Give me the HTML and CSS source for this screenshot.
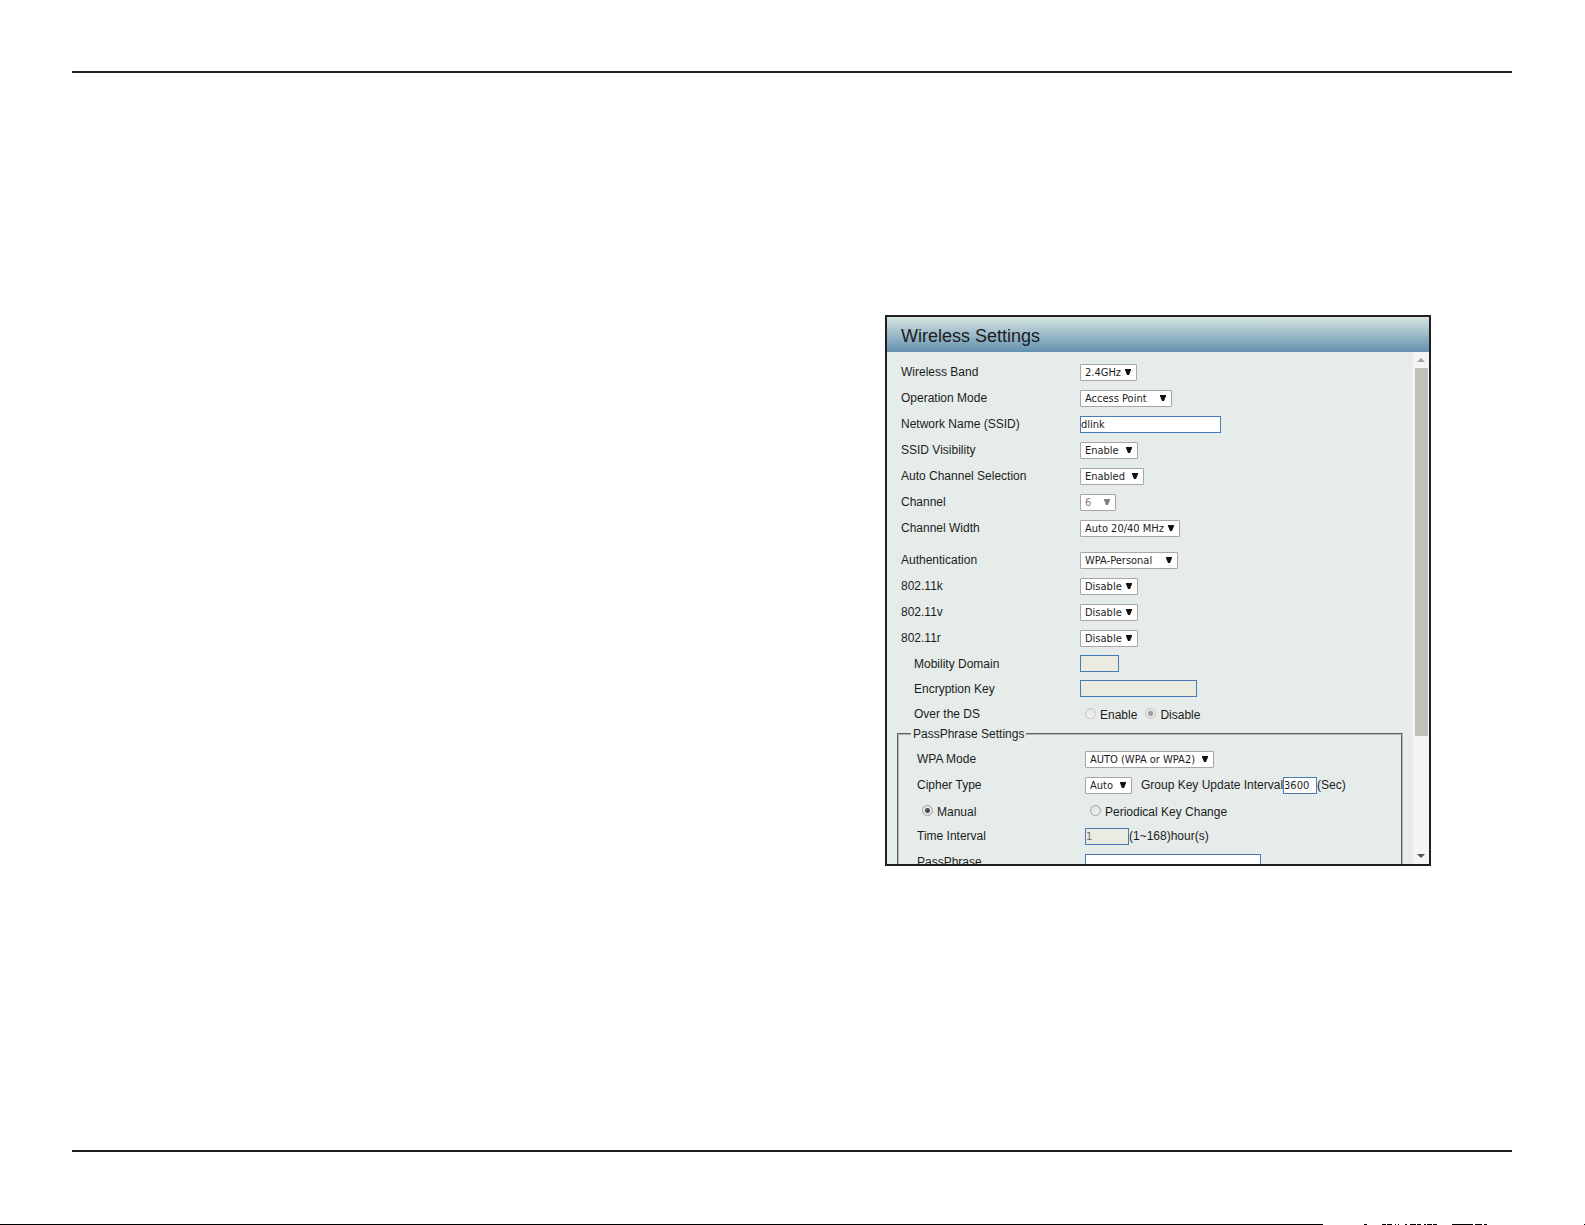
FILE: index.html
```html
<!DOCTYPE html>
<html lang="en">
<head>
    <meta charset="UTF-8">
    <meta name="viewport" content="width=device-width, initial-scale=1.0">
    <title>Wireless Settings</title>
    <link rel="stylesheet" href="styles.css">
</head>
<body>
    <main class="sheet">
        <section class="panel">
            <h1 class="panel-title">Wireless Settings</h1>
            <div class="panel-body">
                <form class="settings">
                    <div class="row">
                        <label for="band">Wireless Band</label>
                        <select id="band" class="w-57"><option>2.4GHz</option></select>
                    </div>
                    <div class="row">
                        <label for="mode">Operation Mode</label>
                        <select id="mode" class="w-92"><option>Access Point</option></select>
                    </div>
                    <div class="row">
                        <label for="ssid">Network Name (SSID)</label>
                        <input type="text" id="ssid" class="w-141" value="dlink">
                    </div>
                    <div class="row">
                        <label for="visibility">SSID Visibility</label>
                        <select id="visibility" class="w-58"><option>Enable</option></select>
                    </div>
                    <div class="row">
                        <label for="auto-channel">Auto Channel Selection</label>
                        <select id="auto-channel" class="w-64"><option>Enabled</option></select>
                    </div>
                    <div class="row">
                        <label for="channel">Channel</label>
                        <select id="channel" class="w-36" disabled><option>6</option></select>
                    </div>
                    <div class="row">
                        <label for="width">Channel Width</label>
                        <select id="width" class="w-100"><option>Auto 20/40 MHz</option></select>
                    </div>

                    <div class="row section">
                        <label for="auth">Authentication</label>
                        <select id="auth" class="w-98"><option>WPA-Personal</option></select>
                    </div>
                    <div class="row">
                        <label for="k">802.11k</label>
                        <select id="k" class="w-58"><option>Disable</option></select>
                    </div>
                    <div class="row">
                        <label for="v">802.11v</label>
                        <select id="v" class="w-58"><option>Disable</option></select>
                    </div>
                    <div class="row">
                        <label for="r">802.11r</label>
                        <select id="r" class="w-58"><option>Disable</option></select>
                    </div>
                    <div class="row sub">
                        <label for="domain">Mobility Domain</label>
                        <input type="text" id="domain" class="w-39" disabled>
                    </div>
                    <div class="row sub">
                        <label for="key">Encryption Key</label>
                        <input type="text" id="key" class="w-117" disabled>
                    </div>
                    <div class="row sub">
                        <span>Over the DS</span>
                        <div class="radios">
                            <label class="radio"><input type="radio" name="ds" disabled><span>Enable</span></label>
                            <label class="radio"><input type="radio" name="ds" checked disabled><span>Disable</span></label>
                        </div>
                    </div>

                    <fieldset>
                        <legend>PassPhrase Settings</legend>
                        <div class="row">
                            <label for="wpa">WPA Mode</label>
                            <select id="wpa" class="w-129"><option>AUTO (WPA or WPA2)</option></select>
                        </div>
                        <div class="row">
                            <label for="cipher">Cipher Type</label>
                            <div class="inline">
                                <select id="cipher" class="w-47"><option>Auto</option></select>
                                <label for="interval" class="group-key">Group Key Update Interval</label>
                                <input type="text" id="interval" class="w-34" value="3600">
                                <span>(Sec)</span>
                            </div>
                        </div>
                        <div class="row radio-row">
                            <label class="radio"><input type="radio" name="change" checked><span>Manual</span></label>
                            <label class="radio"><input type="radio" name="change"><span>Periodical Key Change</span></label>
                        </div>
                        <div class="row">
                            <label for="time">Time Interval</label>
                            <div class="inline">
                                <input type="text" id="time" class="w-44" value="1" disabled>
                                <span>(1~168)hour(s)</span>
                            </div>
                        </div>
                        <div class="row">
                            <label for="pass">PassPhrase</label>
                            <input type="text" id="pass" class="w-176">
                        </div>
                    </fieldset>
                </form>
                <div class="scrollbar">
                    <svg class="arrow" viewBox="0 0 16 16"><path d="M4 10h8L8 6z" fill="#a3a3a3"/></svg>
                    <div class="track"><div class="thumb"></div></div>
                    <svg class="arrow" viewBox="0 0 16 16"><path d="M4 6h8l-4 4z" fill="#505050"/></svg>
                </div>
            </div>
        </section>
    </main>
    <footer class="strip">
        <div class="strip-bar"></div>
        <svg class="strip-marks" viewBox="0 0 124 1" shape-rendering="crispEdges">
            <path d="M0 0h3v1H0zM18 0h4v1h-4zM23 0h5v1h-5zM31 0h1v1h-1zM34 0h1v1h-1zM41 0h2v1h-2zM46 0h6v1h-6zM53 0h4v1h-4zM60 0h2v1h-2zM63 0h5v1h-5zM69 0h4v1h-4zM88 0h21v1H88zM111 0h7v1h-7zM120 0h3v1h-3z"/>
        </svg>
        <div class="strip-end"></div>
    </footer>
</body>
</html>
```
FILE: styles.css
```css
* {
    box-sizing: border-box;
}

body {
    margin: 0;
    min-height: 100vh;
    display: flex;
    flex-direction: column;
    background: #fff;
    color: #1c1c1c;
    font-family: "Liberation Sans", Arial, sans-serif;
    font-size: 12px;
    line-height: 14px;
}

/* ruled page area */
.sheet {
    flex: 1;
    margin: 71px 73px 72px 72px;
    padding: 242px 81px 0 0;
    border-top: 2px solid #231f20;
    border-bottom: 2px solid #231f20;
}

.panel {
    max-width: 546px;
    margin-left: auto;
    border: 2px solid #231f20;
    background: #e6ecea;
}

.panel-title {
    margin: 0;
    padding: 3px 14px 0;
    font-size: 18px;
    font-weight: normal;
    line-height: 32px;
    background: linear-gradient(#d5e5e2, #6390b0);
}

.panel-body {
    display: flex;
    height: 512px;
    overflow: hidden;
}

.settings {
    flex: 1;
    padding: 7px 10px 0;
}

.row {
    display: grid;
    grid-template-columns: 179px 1fr;
    align-items: center;
    height: 26px;
    padding-left: 4px;
}

.section {
    margin-top: 6px;
}

.sub {
    grid-template-columns: 166px 1fr;
    height: 25px;
    padding-left: 17px;
}

select,
input[type="text"] {
    height: 17px;
    margin: 0;
    font-family: "DejaVu Sans Condensed", "DejaVu Sans", sans-serif;
    font-size: 11px;
    color: #1c1c1c;
    background-color: #fff;
}

select {
    appearance: none;
    padding: 0 0 0 4px;
    border: 1px solid #a6a6a6;
    border-radius: 1px;
    background-image: url("data:image/svg+xml,%3Csvg xmlns='http://www.w3.org/2000/svg' width='6' height='6'%3E%3Cpath d='M0 0h6v1L4 6H2L0 1z' fill='%23111'/%3E%3C/svg%3E");
    background-repeat: no-repeat;
    background-position: right 5px top 4px;
}

select:disabled {
    color: #808080;
    opacity: 1;
    background-image: url("data:image/svg+xml,%3Csvg xmlns='http://www.w3.org/2000/svg' width='6' height='6'%3E%3Cpath d='M0 0h6v1L4 6H2L0 1z' fill='%23808080'/%3E%3C/svg%3E");
}

input[type="text"] {
    padding: 0;
    border: 1px solid #4a7ab5;
}

input[type="text"]:disabled {
    color: #6d6d6d;
    background-color: #ebebe2;
}

.w-34 { width: 34px; }
.w-36 { width: 36px; }
.w-39 { width: 39px; }
.w-44 { width: 44px; }
.w-47 { width: 47px; }
.w-57 { width: 57px; }
.w-58 { width: 58px; }
.w-64 { width: 64px; }
.w-92 { width: 92px; }
.w-98 { width: 98px; }
.w-100 { width: 100px; }
.w-117 { width: 117px; }
.w-129 { width: 129px; }
.w-141 { width: 141px; }
.w-176 { width: 176px; }

.inline,
.radios,
.radio {
    display: flex;
    align-items: center;
}

.group-key {
    margin-left: 9px;
}

.radios {
    gap: 8px;
    padding-left: 5px;
}

.radio {
    gap: 4px;
}

.radio span {
    padding-top: 3px;
}

input[type="radio"] {
    appearance: none;
    width: 11px;
    height: 11px;
    margin: 0;
    border: 1px solid #a0a0a0;
    border-radius: 50%;
    background: linear-gradient(#e2e2e2, #f2f2f2);
}

input[type="radio"]:checked {
    background: radial-gradient(circle, #4c4c4c 2px, #e6e6e6 3px);
}

input[type="radio"]:disabled {
    border-color: #c6c6c6;
}

input[type="radio"]:checked:disabled {
    background: radial-gradient(circle, #9c9c9c 2px, #e6e6e6 3px);
}

fieldset {
    margin: 1px 0 0;
    padding: 5px 12px 12px;
    border: 2px groove #b4b4b4;
}

legend {
    padding: 0 2px;
}

fieldset .row {
    grid-template-columns: 168px 1fr;
    padding-left: 6px;
}

fieldset .radio-row {
    height: 25px;
    padding-left: 11px;
}

/* scrollbar beside the form */
.scrollbar {
    display: flex;
    flex-direction: column;
    width: 16px;
    background: #f4f4f4;
}

.arrow {
    width: 16px;
    height: 16px;
}

.track {
    flex: 1;
    padding: 0 1px 0 2px;
}

.thumb {
    height: 368px;
    background: #c0c0bb;
}

/* thin strip along the bottom edge */
.strip {
    display: flex;
    height: 1px;
}

.strip-bar {
    width: 1323px;
    background: #000;
}

.strip-marks {
    width: 124px;
    height: 1px;
    margin-left: 41px;
}

.strip-end {
    width: 1px;
    margin-left: auto;
    background: #000;
}
```
